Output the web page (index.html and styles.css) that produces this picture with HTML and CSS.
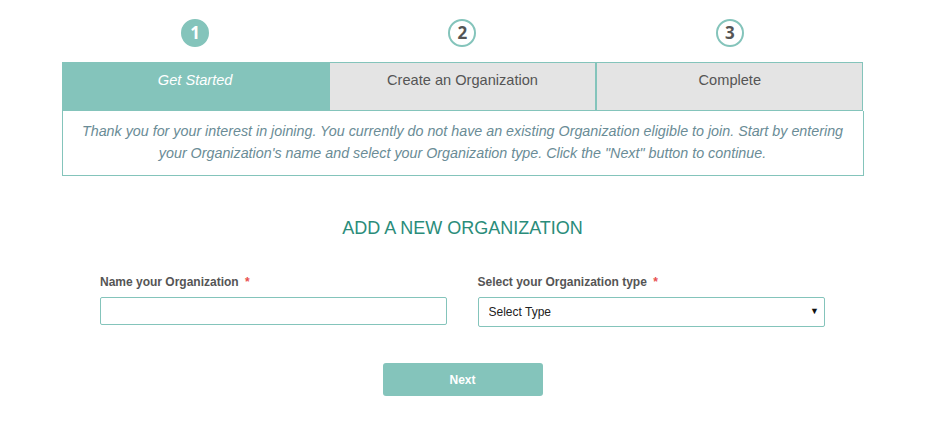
FILE: index.html
```html
<!DOCTYPE html>
<html lang="en">
<head>
    <meta charset="UTF-8">
    <title>Add a New Organization</title>
    <link rel="stylesheet" href="styles.css">
</head>
<body>
    <div class="wizard">
        <ul class="steps">
            <li><span class="num active">1</span></li>
            <li><span class="num">2</span></li>
            <li><span class="num">3</span></li>
        </ul>
        <ul class="tabs">
            <li class="active">Get Started</li>
            <li>Create an Organization</li>
            <li>Complete</li>
        </ul>
        <p class="intro">Thank you for your interest in joining. You currently do not have an existing Organization eligible to join. Start by entering your Organization's name and select your Organization type. Click the "Next" button to continue.</p>
    </div>

    <h2 class="title">ADD A NEW ORGANIZATION</h2>

    <form class="org-form" action="#">
        <div class="field">
            <label for="org-name">Name your Organization <em>*</em></label>
            <input type="text" id="org-name">
        </div>
        <div class="field">
            <label for="org-type">Select your Organization type <em>*</em></label>
            <div class="select-wrap">
                <select id="org-type">
                    <option>Select Type</option>
                </select>
            </div>
        </div>
        <div class="actions">
            <button type="button" class="btn-next">Next</button>
        </div>
    </form>
</body>
</html>
```

FILE: styles.css
```css
*{
    margin: 0;
    padding: 0;
    box-sizing: border-box;
}
ul{
    list-style: none;
}
body{
    font-family: "Liberation Sans", Arial, sans-serif;
    background: #fff;
    color: #555;
}
.wizard{
    width: 802px;
    margin: 0 auto;
    padding-top: 19px;
}
.steps{
    display: flex;
    height: 43px;
}
.steps li{
    flex: 1;
    display: flex;
    justify-content: center;
}
.num{
    width: 28px;
    height: 28px;
    border-radius: 50%;
    border: 2px solid #84c4bb;
    background: #fff;
    color: #555;
    font-family: "Open Sans", sans-serif;
    font-weight: 700;
    font-size: 17px;
    line-height: 24px;
    text-align: center;
}
.num.active{
    background: #84c4bb;
    color: #fff;
}
.tabs{
    display: flex;
}
.tabs li{
    flex: 1;
    height: 49px;
    padding-top: 7px;
    border: 1px solid #84c4bb;
    background: #e4e4e4;
    color: #555;
    font-size: 14.6px;
    line-height: 20px;
    text-align: center;
}
.tabs li.active{
    background: #84c4bb;
    color: #fff;
    font-style: italic;
}
.intro{
    border: 1px solid #84c4bb;
    border-top: 0;
    padding: 9px 12px 11px;
    font-size: 14.3px;
    line-height: 22px;
    font-style: italic;
    color: #6a8c96;
    text-align: center;
}
.title{
    margin-top: 41px;
    font-size: 18px;
    font-weight: normal;
    color: #2a8c7a;
    text-align: center;
    line-height: 22px;
}
.org-form{
    width: 725px;
    margin: 35px auto 0;
    display: grid;
    grid-template-columns: 1fr 1fr;
    column-gap: 30px;
}
.field label{
    display: block;
    font-size: 12px;
    font-weight: bold;
    color: #555;
    line-height: 16px;
    margin-bottom: 7px;
}
.field label em{
    font-style: normal;
    color: #e8504f;
    margin-left: 3px;
}
.field input{
    display: block;
    width: 347px;
    height: 28px;
    border: 1px solid #84c4bb;
    border-radius: 2px;
    font-size: 12px;
    padding: 0 8px;
    outline: none;
}
.select-wrap{
    position: relative;
}
.select-wrap select{
    display: block;
    width: 100%;
    height: 30px;
    border: 1px solid #84c4bb;
    border-radius: 2px;
    background: #fff;
    font-family: "Liberation Sans", Arial, sans-serif;
    font-size: 12px;
    color: #222;
    padding: 0 10px;
    appearance: none;
    -webkit-appearance: none;
    outline: none;
}
.select-wrap::after{
    content: "\25BC";
    position: absolute;
    right: 6px;
    top: 9px;
    font-size: 9px;
    color: #111;
    pointer-events: none;
}
.actions{
    grid-column: 1 / 3;
    display: flex;
    justify-content: center;
    margin-top: 36px;
}
.btn-next{
    width: 160px;
    height: 33px;
    border: 0;
    border-radius: 3px;
    background: #84c4bb;
    color: #fff;
    font-family: "Liberation Sans", Arial, sans-serif;
    font-size: 12px;
    font-weight: bold;
    cursor: pointer;
}
```
